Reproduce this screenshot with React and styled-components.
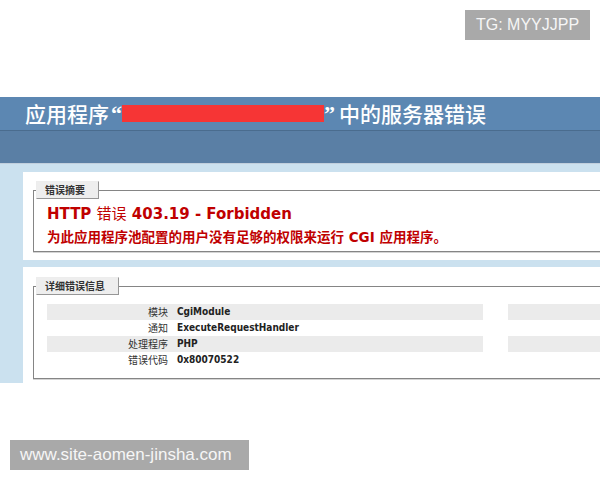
import styled, { createGlobalStyle } from 'styled-components';

const GlobalStyle = createGlobalStyle`
  html, body {
    margin: 0;
    padding: 0;
    background: #ffffff;
  }
  body {
    font-family: "DejaVu Sans", "Noto Sans CJK SC", sans-serif;
  }
`;

const Page = styled.div`
  position: relative;
  width: 600px;
  height: 480px;
  overflow: hidden;
  background: #ffffff;
`;

// 截图部分 (IIS 错误页)
const Shot = styled.div`
  margin-top: 97px;
  height: 286px;
  overflow: hidden;
  background: #cbe1ef;
`;

const Header = styled.div`
  height: 33px;
  background: #5c87b2;
  padding-left: 25px;
`;

const Title = styled.h1`
  margin: 0;
  line-height: 33px;
  font-size: 21px;
  font-weight: 500;
  color: #ffffff;
  font-family: "Noto Sans CJK SC", sans-serif;
  white-space: nowrap;
  display: flex;
  align-items: center;
`;

const Quote = styled.span`
  font-family: "Liberation Serif", "Noto Sans CJK SC", serif;
  font-weight: bold;
  font-size: 22px;
  width: ${(props) => props.w}px;
  text-align: ${(props) => props.align};
`;

const Redact = styled.span`
  display: inline-block;
  width: 202px;
  height: 17px;
  background: #f63535;
`;

const ServerVersion = styled.div`
  height: 32px;
  background: #5a7fa5;
  border-top: 1px solid #4a6c8e;
  border-bottom: 1px solid #c1cfdd;
`;

const Content = styled.div`
  padding-left: 23px;
`;

const Card = styled.div`
  width: 680px;
  background: #ffffff;
  margin-top: ${(props) => props.top}px;
  padding: ${(props) => props.padTop}px 0 8px 10px;
`;

const Fieldset = styled.fieldset`
  margin: 0;
  padding: 0 13px ${(props) => props.padBottom}px 13px;
  border: 1px solid #858585;
  box-shadow: 0 1px 0 #d4d4d4;
`;

const Legend = styled.legend`
  margin-left: -11px;
  padding: 0 13px 0 8px;
  height: 16px;
  line-height: 16px;
  font-size: 10px;
  font-weight: bold;
  color: #333333;
  font-family: "Noto Sans CJK SC", sans-serif;
  background: #eeeeee;
  border-top: 1px solid #ededed;
  border-left: 1px solid #ededed;
  border-right: 1px solid #969696;
  border-bottom: 1px solid #969696;
`;

const ErrorTitle = styled.h2`
  margin: 4px 0 0 0;
  line-height: 20px;
  font-size: 15px;
  font-weight: bold;
  color: #c00000;
  font-family: "DejaVu Sans", "Noto Sans CJK SC", sans-serif;
  white-space: nowrap;
  span {
    font-weight: normal;
    font-family: "Noto Sans CJK SC", sans-serif;
  }
`;

const ErrorText = styled.h3`
  margin: 3px 0 0 0;
  line-height: 18px;
  font-size: 13.5px;
  font-weight: bold;
  color: #c00000;
  font-family: "Noto Sans CJK SC", sans-serif;
  white-space: nowrap;
  span {
    font-family: "DejaVu Sans", sans-serif;
  }
`;

const Tables = styled.div`
  display: flex;
  gap: 25px;
  margin-top: 9px;
`;

const Table = styled.div`
  width: ${(props) => props.w}px;
  flex-shrink: 0;
`;

const Row = styled.div`
  display: grid;
  grid-template-columns: ${(props) => props.labelW}px 1fr;
  height: 16px;
  line-height: 16px;
  background: ${(props) => (props.alt ? '#ebebeb' : 'transparent')};
`;

const Label = styled.div`
  text-align: right;
  padding-right: 4px;
  font-size: 10px;
  color: #333333;
  font-family: "Noto Sans CJK SC", sans-serif;
  white-space: nowrap;
`;

const Value = styled.div`
  padding-left: 5px;
  font-size: 10px;
  font-weight: bold;
  color: #222222;
  font-family: "DejaVu Sans Condensed", "DejaVu Sans", sans-serif;
  white-space: nowrap;
`;

const Badge = styled.div`
  position: absolute;
  background: #a9a9a9;
  color: #f6f6f6;
  font-family: "Liberation Sans", Arial, sans-serif;
  font-size: ${(props) => props.size}px;
  height: 30px;
  line-height: 30px;
  padding: 0 10px;
  white-space: nowrap;
`;

const TgBadge = styled(Badge)`
  top: 10px;
  right: 10px;
  width: 105px;
  text-align: center;
`;

const SiteBadge = styled(Badge)`
  left: 10px;
  top: 440px;
  width: 219px;
`;

const details = [
  { label: '模块', value: 'CgiModule' },
  { label: '通知', value: 'ExecuteRequestHandler' },
  { label: '处理程序', value: 'PHP' },
  { label: '错误代码', value: '0x80070522' },
];

// 右侧表格在截图里被裁掉，只露出第一行标签的一角
const request = [
  { key: 'url', label: '请求的 URL' },
  { key: 'path', label: '' },
  { key: 'auth', label: '' },
  { key: 'user', label: '' },
];

function App() {
  return (
    <Page>
      <GlobalStyle />
      <Shot>
        <Header>
          <Title>
            应用程序<Quote w={13} align="right">“</Quote>
            <Redact />
            <Quote w={15} align="left">”</Quote>中的服务器错误
          </Title>
        </Header>
        <ServerVersion />
        <Content>
          <Card top={8} padTop={9}>
            <Fieldset padBottom={5}>
              <Legend>错误摘要</Legend>
              <ErrorTitle>
                HTTP <span>错误</span> 403.19 - Forbidden
              </ErrorTitle>
              <ErrorText>
                为此应用程序池配置的用户没有足够的权限来运行<span> CGI </span>应用程序。
              </ErrorText>
            </Fieldset>
          </Card>
          <Card top={7} padTop={10}>
            <Fieldset padBottom={10}>
              <Legend>详细错误信息</Legend>
              <Tables>
                <Table w={436}>
                  {details.map((d, i) => (
                    <Row key={d.label} alt={i % 2 === 0} labelW={125}>
                      <Label>{d.label}</Label>
                      <Value>{d.value}</Value>
                    </Row>
                  ))}
                </Table>
                <Table w={320}>
                  {request.map((d, i) => (
                    <Row key={d.key} alt={i % 2 === 0} labelW={150}>
                      <Label>{d.label}</Label>
                      <Value />
                    </Row>
                  ))}
                </Table>
              </Tables>
            </Fieldset>
          </Card>
        </Content>
      </Shot>
      <TgBadge size={16}>TG: MYYJJPP</TgBadge>
      <SiteBadge size={17}>www.site-aomen-jinsha.com</SiteBadge>
    </Page>
  );
}

export default App;
